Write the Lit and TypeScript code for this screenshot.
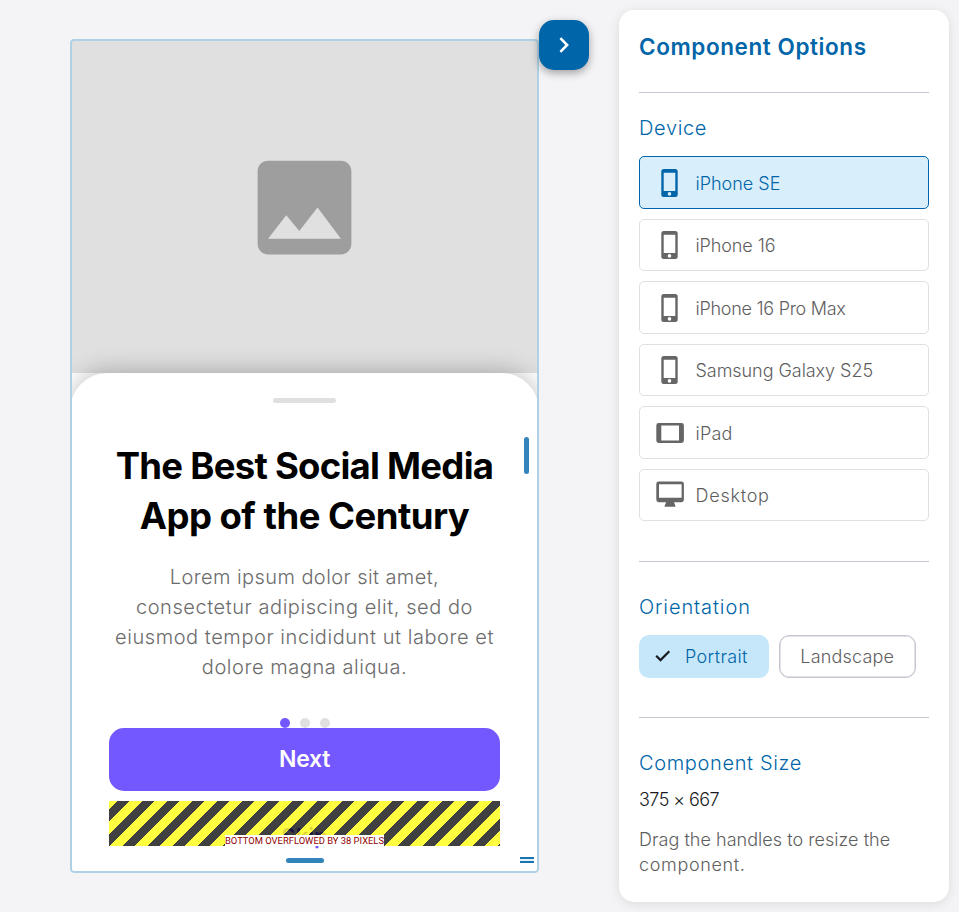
import { LitElement, html, css, svg } from "lit";
import { customElement, property } from "lit/decorators.js";
import { classMap } from "lit/directives/class-map.js";
import { styleMap } from "lit/directives/style-map.js";

type Glyph = "phone" | "tablet" | "desktop";

const DEVICES: { name: string; glyph: Glyph; tracking: number }[] = [
  { name: "iPhone SE", glyph: "phone", tracking: 0 },
  { name: "iPhone 16", glyph: "phone", tracking: -0.1 },
  { name: "iPhone 16 Pro Max", glyph: "phone", tracking: -0.27 },
  { name: "Samsung Galaxy S25", glyph: "phone", tracking: -0.05 },
  { name: "iPad", glyph: "tablet", tracking: 0.2 },
  { name: "Desktop", glyph: "desktop", tracking: 0.75 },
];

const GLYPHS = {
  phone: svg`<path fill-rule="evenodd" d="M8.800 1h11.400a2.500 2.500 0 0 1 2.500 2.500v23a2.500 2.500 0 0 1-2.500 2.500H8.800a2.500 2.500 0 0 1-2.500-2.500v-23A2.500 2.500 0 0 1 8.800 1ZM8.700 4.700v18.300h11.600V4.700ZM14.500 24.100a1.800 1.800 0 1 0 0 3.600a1.800 1.800 0 1 0 0-3.600Z"/>`,
  tablet: svg`<path fill-rule="evenodd" d="M3.700 5h22.800a2.400 2.400 0 0 1 2.400 2.400v15.200a2.400 2.400 0 0 1-2.400 2.400H3.700a2.400 2.400 0 0 1-2.400-2.400V7.400A2.400 2.400 0 0 1 3.700 5ZM6.300 7.600v14.800h17.700V7.600Z"/>`,
  desktop: svg`<path fill-rule="evenodd" d="M3.700 1.500h22.800a2.400 2.400 0 0 1 2.400 2.400v15.900a2.400 2.400 0 0 1-2.400 2.400H19l1.300 3.200V26.800H9.700V25.400L11.200 22.200H3.700a2.400 2.400 0 0 1-2.400-2.400V3.900A2.400 2.400 0 0 1 3.700 1.500ZM4 4.200v13.500h22.600V4.200Z"/>`,
};

@customElement("phone-preview")
export class PhonePreview extends LitElement {
  static styles = css`
    :host { display: block; position: relative; width: 469px; height: 834px; overflow: hidden; border-radius: 4px; background: #fff; }
    .screen { display: flex; flex-direction: column; height: 100%; }
    .hero { box-sizing: border-box; height: 334px; padding-top: 2px; flex: none; display: flex; align-items: center; justify-content: center; background: #e0e0e0; }
    .hero svg { width: 125px; height: 125px; fill: #9e9e9e; }
    .sheet { flex: 1; display: flex; flex-direction: column; align-items: center; padding-top: 25px; background: #fff; border-radius: 37.5px 37.5px 0 0; box-shadow: 0 -4px 22px rgba(0, 0, 0, 0.22); }
    .grip { width: 62.5px; height: 5px; border-radius: 2.5px; background: #e0e0e0; flex: none; }
    .title { margin: 38px 0 0; font-size: 36.5px; line-height: 50px; font-weight: 700; color: #000; text-align: center; white-space: nowrap; letter-spacing: -0.74px; }
    .title .second { letter-spacing: -0.52px; }
    .body { margin: 21px 0 0; font-size: 20px; line-height: 30px; font-weight: 300; color: #6c6c6c; text-align: center; white-space: nowrap; letter-spacing: 0.56px; }
    .body .first { letter-spacing: 0.42px; }
    .dots { display: flex; gap: 10px; margin-top: 36px; height: 10px; flex: none; }
    .dot { width: 10px; height: 10px; border-radius: 50%; background: #e0e0e0; }
    .dot.on { background: #7357ff; }
    .next { width: 390.5px; height: 62.5px; flex: none; border: 0; border-radius: 15px; background: #7357ff; color: #fff; font: 600 23px/62.5px Inter, sans-serif; letter-spacing: -0.3px; padding: 0; }
    .skip { position: relative; width: 390.5px; height: 45px; margin-top: 10.5px; flex: none; text-align: center; font-size: 22px; line-height: 70px; font-weight: 600; color: #7357ff; }
    .hazard { position: absolute; inset: 0; background: repeating-linear-gradient(135deg, rgba(255, 255, 0, 0.75) 0 5.66px, rgba(0, 0, 0, 0.75) 5.66px 14.5px, rgba(255, 255, 0, 0.75) 14.5px 17.678px); display: flex; align-items: flex-end; justify-content: center; }
    .warning { background: #fff; color: #900000; font: 400 9.4px/11px Roboto, sans-serif; white-space: nowrap; }
    .outline { position: absolute; inset: 0; border: 2px solid #b0d1e5; border-radius: 4px; }
    .bar-right { position: absolute; right: 10px; top: 397.5px; width: 5px; height: 37.5px; border-radius: 2.5px; background: #3384ba; }
    .bar-bottom { position: absolute; bottom: 10px; left: 216px; width: 37.5px; height: 5px; border-radius: 2.5px; background: #3384ba; }
    .corner { position: absolute; right: 5.5px; bottom: 10.5px; width: 13.5px; height: 2px; border-top: 2px solid #1a74b1; border-bottom: 2px solid #1a74b1; background: #e5f2fa; }
  `;
  render() {
    return html`
      <div class="screen">
        <div class="hero">
          <svg viewBox="0 0 24 24"><path d="M21 19V5c0-1.100-.9-2-2-2H5c-1.100 0-2 .9-2 2v14c0 1.100.9 2 2 2h14c1.100 0 2-.9 2-2zM8.500 13.500l2.500 3.010L14.500 12l4.500 6H5l3.500-4.500z" /></svg>
        </div>
        <div class="sheet">
          <div class="grip"></div>
          <h1 class="title">The Best Social Media<br /><span class="second">App of the Century</span></h1>
          <p class="body"><span class="first">Lorem ipsum dolor sit amet,</span><br />consectetur adipiscing elit, sed do<br />eiusmod tempor incididunt ut labore et<br />dolore magna aliqua.</p>
          <div class="dots"><span class="dot on"></span><span class="dot"></span><span class="dot"></span></div>
          <button class="next">Next</button>
          <div class="skip">Skip<div class="hazard"><span class="warning">BOTTOM OVERFLOWED BY 38 PIXELS</span></div></div>
        </div>
      </div>
      <div class="outline"></div>
      <div class="bar-right"></div>
      <div class="bar-bottom"></div>
      <div class="corner"></div>
    `;
  }
}

@customElement("device-option")
export class DeviceOption extends LitElement {
  @property() name = "";
  @property() glyph: Glyph = "phone";
  @property({ type: Number }) tracking = 0;
  @property({ type: Boolean }) active = false;
  static styles = css`
    :host { display: block; }
    .option { box-sizing: border-box; height: 52.5px; display: flex; align-items: center; gap: 10.5px; padding: 0.5px 15px 0; border: 1px solid #e0e0e0; border-radius: 5px; background: #fff; color: #5e5e5e; font-size: 18px; font-weight: 300; }
    .option.active { border-color: #0065a9; background: #d9eefb; color: #0065a9; }
    svg { width: 30px; height: 30px; fill: #666; flex: none; }
    .active svg { fill: #0065a9; }
    .name { padding-top: 1px; }
  `;
  render() {
    return html`<div class=${classMap({ option: true, active: this.active })}>
      <svg viewBox="0 0 30 30">${GLYPHS[this.glyph]}</svg><span class="name" style=${styleMap({ letterSpacing: `${this.tracking}px` })}>${this.name}</span>
    </div>`;
  }
}

@customElement("app-root")
export class AppRoot extends LitElement {
  static styles = css`
    :host { display: flex; height: 912px; overflow: hidden; background: #f4f4f7; font-family: Inter, sans-serif; }
    .stage { position: relative; flex: 1; display: flex; align-items: center; justify-content: center; margin-right: 10px; }
    .toggle { position: absolute; right: 20px; top: 20px; width: 50px; height: 50px; border: 0; padding: 0; border-radius: 15px; background: #0065a9; box-shadow: 0 3px 8px rgba(0, 0, 0, 0.35); display: flex; align-items: center; justify-content: center; }
    .toggle svg { width: 30px; height: 30px; }
    .panel { box-sizing: border-box; width: 330px; margin: 10px 10px 10px 0; padding: 20px; border-radius: 15px; background: #fff; box-shadow: 0 2px 12px rgba(0, 0, 0, 0.1); display: flex; flex-direction: column; }
    .heading { margin: 0; font-size: 22.5px; line-height: 34px; font-weight: 600; color: #0065a9; letter-spacing: 0.58px; }
    .rule { height: 1px; flex: none; background: #c7c5d0; }
    .label { margin: 0; font-size: 20px; line-height: 30px; font-weight: 350; color: #0065a9; letter-spacing: 0.65px; }
    .label.wide { letter-spacing: 0.9px; }
    .heading + .rule { margin: 28px 0 20px; }
    .devices { display: flex; flex-direction: column; gap: 10px; margin-top: 13.25px; }
    .devices + .rule { margin: 39.25px 0 30px; }
    .chips { display: flex; gap: 10px; margin-top: 13.5px; }
    .chip { box-sizing: border-box; height: 42.5px; border-radius: 10px; display: flex; align-items: center; font-size: 18px; font-weight: 300; }
    .chip span { padding-top: 1px; }
    .chip.on { width: 130px; padding-left: 14px; gap: 12px; background: #c6e7fa; color: #0065a9; letter-spacing: 0.35px; }
    .chip.off { width: 136.5px; justify-content: center; border: 1px solid #c7c5d0; box-shadow: inset 0 0 0 0.5px #c7c5d0; color: #5e5e5e; letter-spacing: 0.2px; }
    .chip svg { width: 20px; height: 20px; }
    .chips + .rule { margin: 39.25px 0 30px; }
    .size { margin: 6.75px 0 0; font-size: 18px; line-height: 30px; font-weight: 300; color: #1a1b22; letter-spacing: -0.55px; }
    .hint { margin: 12.5px 0 0; font-size: 18px; line-height: 25px; font-weight: 300; color: #5e5e5e; letter-spacing: 0.04px; }
    .hint .last { letter-spacing: 0.65px; }
  `;
  render() {
    return html`
      <main class="stage">
        <phone-preview></phone-preview>
        <button class="toggle" aria-label="Collapse options">
          <svg viewBox="0 0 30 30"><path d="M11.400 8.200L18.100 15l-6.700 6.800" fill="none" stroke="#fff" stroke-width="2.600" /></svg>
        </button>
      </main>
      <aside class="panel">
        <h2 class="heading">Component Options</h2>
        <div class="rule"></div>
        <h3 class="label">Device</h3>
        <div class="devices">
          ${DEVICES.map((d, i) => html`<device-option .name=${d.name} .glyph=${d.glyph} .tracking=${d.tracking} .active=${i === 0}></device-option>`)}
        </div>
        <div class="rule"></div>
        <h3 class="label wide">Orientation</h3>
        <div class="chips">
          <div class="chip on">
            <svg viewBox="0 0 20 20"><path d="M3.200 9.800l4.300 4.300 8.800-8.800" fill="none" stroke="#1a1b22" stroke-width="2.200" /></svg><span>Portrait</span>
          </div>
          <div class="chip off"><span>Landscape</span></div>
        </div>
        <div class="rule"></div>
        <h3 class="label">Component Size</h3>
        <p class="size">375 × 667</p>
        <p class="hint">Drag the handles to resize the<br /><span class="last">component.</span></p>
      </aside>
    `;
  }
}
